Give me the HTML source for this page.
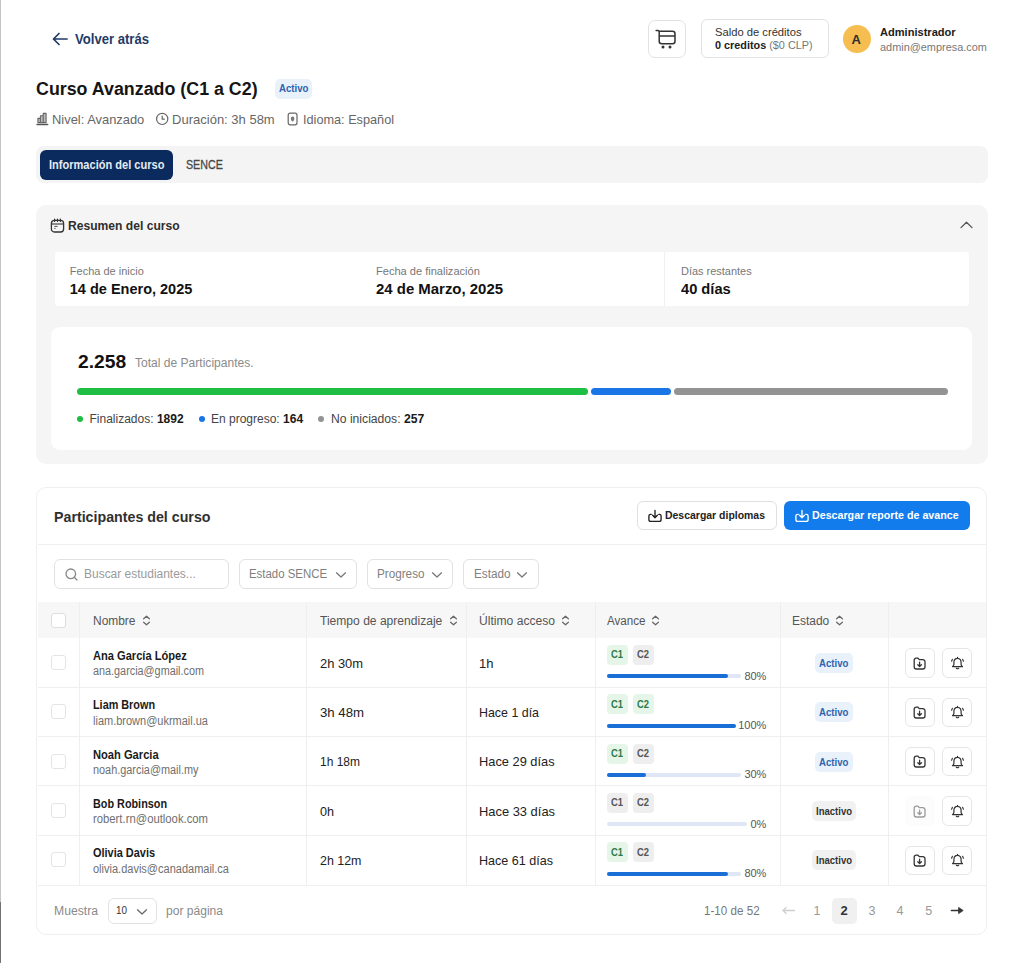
<!DOCTYPE html>
<html><head><meta charset="utf-8"><style>
html,body{margin:0;padding:0;background:#fff;}
body{width:1024px;height:965px;position:relative;overflow:hidden;font-family:"Liberation Sans",sans-serif;}
</style></head><body>
<div style="position:absolute;left:0.00px;top:0.00px;width:1.30px;height:902.00px;background:#c4c4c4"></div>
<div style="position:absolute;left:0.00px;top:902.00px;width:1.30px;height:61.00px;background:#727272"></div>
<svg style="position:absolute;left:50px;top:30px;" width="20" height="18" viewBox="0 0 20 18" fill="none"><path d="M3.5 9 H17 M3.5 9 L9 3.5 M3.5 9 L9 14.5" stroke="#1f3b66" stroke-width="1.7" stroke-linecap="round" stroke-linejoin="round"/></svg>
<div style="position:absolute;left:75.20px;top:32.45px;font-size:14px;line-height:14px;font-weight:700;color:#1f3b66;white-space:pre;transform:scaleX(0.9354);transform-origin:0 0;">Volver atrás</div>
<div style="position:absolute;left:647.50px;top:19.70px;width:38.80px;height:38.60px;box-sizing:border-box;border:1px solid #e2e2e2;border-radius:7px;background:#fff"></div>
<svg style="position:absolute;left:647.5px;top:19.7px;" width="39" height="39" viewBox="0 0 39 39" fill="none"><path d="M8.1 10.4 H9.8 Q11.2 10.4 11.2 11.9 V21.3 A2.5 2.5 0 0 0 13.7 23.8 H24.5 A2.5 2.5 0 0 0 27 21.3 V13.8 A2.5 2.5 0 0 0 24.5 11.3 H11.2 M11.2 16.1 H27" stroke="#333" stroke-width="1.5" stroke-linecap="round" stroke-linejoin="round"/><circle cx="15" cy="27" r="1.5" fill="#333"/><circle cx="22" cy="27" r="1.5" fill="#333"/></svg>
<div style="position:absolute;left:701.00px;top:19.40px;width:127.50px;height:39.00px;box-sizing:border-box;border:1px solid #e2e2e2;border-radius:6px;background:#fff"></div>
<div style="position:absolute;left:715.20px;top:26.57px;font-size:11.5px;line-height:11.5px;font-weight:400;color:#333;white-space:pre;transform:scaleX(0.9734);transform-origin:0 0;">Saldo de créditos</div>
<div style="position:absolute;left:715.20px;top:40.07px;font-size:11.5px;line-height:11.5px;white-space:pre;transform:scaleX(0.9427);transform-origin:0 0;"><span style="font-weight:700;color:#222">0 creditos</span><span style="font-weight:400;color:#777"> ($0 CLP)</span></div>
<div style="position:absolute;left:842.50px;top:24.60px;width:28.00px;height:28.00px;border-radius:50%;background:#f6be50"></div>
<div style="position:absolute;left:851.40px;top:33.00px;font-size:13px;line-height:13px;font-weight:700;color:#2e2e2e;white-space:pre;">A</div>
<div style="position:absolute;left:879.80px;top:26.57px;font-size:11.5px;line-height:11.5px;font-weight:700;color:#1c1c1c;white-space:pre;transform:scaleX(0.9619);transform-origin:0 0;">Administrador</div>
<div style="position:absolute;left:880.00px;top:42.02px;font-size:11.2px;line-height:11.2px;font-weight:400;color:#777;white-space:pre;transform:scaleX(0.9753);transform-origin:0 0;">admin@empresa.com</div>
<div style="position:absolute;left:36.40px;top:79.66px;font-size:18px;line-height:18px;font-weight:700;color:#151515;white-space:pre;transform:scaleX(0.9906);transform-origin:0 0;">Curso Avanzado (C1 a C2)</div>
<div style="position:absolute;left:274.60px;top:78.80px;width:37.30px;height:19.90px;background:#e9f1fb;border-radius:5px"></div>
<div style="position:absolute;left:278.50px;top:83.83px;font-size:10px;line-height:10px;font-weight:700;color:#2f63ad;white-space:pre;transform:scaleX(0.9653);transform-origin:0 0;">Activo</div>
<svg style="position:absolute;left:36px;top:111px;" width="13" height="15" viewBox="0 0 13 15" fill="none"><path d="M1.9 11.6 V7.4 H4.4 V11.6 Z M4.4 11.6 V4.8 H7.2 V11.6 Z M7.2 11.6 V2.4 H10.1 V11.6 Z" fill="#bbb" stroke="#666" stroke-width="1.1" stroke-linejoin="round"/><path d="M1.1 13.5 H11.6" stroke="#555" stroke-width="1.6" stroke-linecap="round"/></svg>
<div style="position:absolute;left:52.00px;top:112.60px;font-size:13px;line-height:13px;font-weight:400;color:#666;white-space:pre;transform:scaleX(0.9926);transform-origin:0 0;">Nivel: Avanzado</div>
<svg style="position:absolute;left:155px;top:112px;" width="14" height="14" viewBox="0 0 14 14" fill="none"><circle cx="7.2" cy="6.9" r="5.6" stroke="#666" stroke-width="1.2"/><path d="M7.2 4 V7.2 H9.3" stroke="#666" stroke-width="1.2" stroke-linecap="round" stroke-linejoin="round"/></svg>
<div style="position:absolute;left:172.10px;top:112.60px;font-size:13px;line-height:13px;font-weight:400;color:#666;white-space:pre;">Duración: 3h 58m</div>
<svg style="position:absolute;left:286px;top:111px;" width="13" height="16" viewBox="0 0 13 16" fill="none"><rect x="2.2" y="2.2" width="8.8" height="11.6" rx="2" stroke="#666" stroke-width="1.2"/><path d="M6.6 5.6 C5.2 5.6 4.9 6.6 4.9 7.8 C4.9 9.2 5.8 10.2 6.6 10.6 C7.4 10.2 8.3 9.2 8.3 7.8 C8.3 6.6 8 5.6 6.6 5.6Z" fill="#777"/></svg>
<div style="position:absolute;left:302.50px;top:112.60px;font-size:13px;line-height:13px;font-weight:400;color:#666;white-space:pre;transform:scaleX(0.9762);transform-origin:0 0;">Idioma: Español</div>
<div style="position:absolute;left:36.40px;top:146.00px;width:952.10px;height:37.30px;background:#f4f4f4;border-radius:8px"></div>
<div style="position:absolute;left:39.70px;top:149.70px;width:133.80px;height:30.50px;background:#0b2b5f;border-radius:6px"></div>
<div style="position:absolute;left:48.90px;top:159.12px;font-size:12.5px;line-height:12.5px;font-weight:700;color:#e6ebf3;white-space:pre;transform:scaleX(0.8838);transform-origin:0 0;">Información del curso</div>
<div style="position:absolute;left:186.40px;top:159.03px;font-size:12.6px;line-height:12.6px;font-weight:400;color:#474747;white-space:pre;transform:scaleX(0.8478);transform-origin:0 0;-webkit-text-stroke:0.3px #474747;">SENCE</div>
<div style="position:absolute;left:36.40px;top:204.70px;width:952.10px;height:259.80px;background:#f5f5f5;border-radius:10px"></div>
<svg style="position:absolute;left:49px;top:217px;" width="17" height="17" viewBox="0 0 17 17" fill="none"><rect x="2.4" y="3.4" width="12.2" height="11.6" rx="3" stroke="#333" stroke-width="1.3"/><path d="M2.6 7 H14.4" stroke="#444" stroke-width="1.2"/><path d="M5.6 2 V4.4 M8.5 2 V4.4 M11.4 2 V4.4" stroke="#333" stroke-width="1.2" stroke-linecap="round"/><path d="M5.3 9.4 H8.6 M5.3 11.4 H6.6" stroke="#555" stroke-width="1"/></svg>
<div style="position:absolute;left:68.20px;top:220.42px;font-size:12.5px;line-height:12.5px;font-weight:700;color:#2e2e2e;white-space:pre;transform:scaleX(0.9678);transform-origin:0 0;">Resumen del curso</div>
<svg style="position:absolute;left:958px;top:219px;" width="17" height="12" viewBox="0 0 17 12" fill="none"><path d="M3 8.6 L8.5 3.2 L14 8.6" stroke="#555" stroke-width="1.3" stroke-linecap="round" stroke-linejoin="round"/></svg>
<div style="position:absolute;left:55.40px;top:252.00px;width:913.40px;height:54.30px;background:#fff;border-radius:3px"></div>
<div style="position:absolute;left:664.00px;top:252.00px;width:1.00px;height:54.30px;background:#f0f0f0"></div>
<div style="position:absolute;left:69.80px;top:266.29px;font-size:11px;line-height:11px;font-weight:400;color:#777;white-space:pre;">Fecha de inicio</div>
<div style="position:absolute;left:69.80px;top:282.23px;font-size:14.5px;line-height:14.5px;font-weight:700;color:#111;white-space:pre;">14 de Enero, 2025</div>
<div style="position:absolute;left:375.50px;top:266.29px;font-size:11px;line-height:11px;font-weight:400;color:#777;white-space:pre;transform:scaleX(1.0044);transform-origin:0 0;">Fecha de finalización</div>
<div style="position:absolute;left:375.50px;top:282.23px;font-size:14.5px;line-height:14.5px;font-weight:700;color:#111;white-space:pre;transform:scaleX(1.0299);transform-origin:0 0;">24 de Marzo, 2025</div>
<div style="position:absolute;left:681.10px;top:266.29px;font-size:11px;line-height:11px;font-weight:400;color:#777;white-space:pre;transform:scaleX(0.9969);transform-origin:0 0;">Días restantes</div>
<div style="position:absolute;left:681.10px;top:282.23px;font-size:14.5px;line-height:14.5px;font-weight:700;color:#111;white-space:pre;transform:scaleX(1.0108);transform-origin:0 0;">40 días</div>
<div style="position:absolute;left:51.40px;top:327.20px;width:921.10px;height:122.50px;background:#fff;border-radius:9px"></div>
<div style="position:absolute;left:77.60px;top:353.79px;font-size:17.5px;line-height:17.5px;font-weight:700;color:#111;white-space:pre;transform:scaleX(1.1008);transform-origin:0 0;">2.258</div>
<div style="position:absolute;left:135.20px;top:357.34px;font-size:12px;line-height:12px;font-weight:400;color:#8a8a8a;white-space:pre;transform:scaleX(1.0045);transform-origin:0 0;">Total de Participantes.</div>
<div style="position:absolute;left:77.00px;top:387.70px;width:510.80px;height:7.30px;background:#1fbe45;border-radius:3.5px"></div>
<div style="position:absolute;left:591.00px;top:387.70px;width:79.50px;height:7.30px;background:#1a76e6;border-radius:3.5px"></div>
<div style="position:absolute;left:673.80px;top:387.70px;width:273.80px;height:7.30px;background:#939393;border-radius:3.5px"></div>
<div style="position:absolute;left:77.00px;top:415.60px;width:6.00px;height:6.00px;background:#1fbe45;border-radius:50%"></div>
<div style="position:absolute;left:89.50px;top:412.84px;font-size:12px;line-height:12px;white-space:pre;"><span style="font-weight:400;color:#444">Finalizados: </span><span style="font-weight:700;color:#1a1a1a">1892</span></div>
<div style="position:absolute;left:199.00px;top:415.60px;width:6.00px;height:6.00px;background:#1a76e6;border-radius:50%"></div>
<div style="position:absolute;left:211.00px;top:412.84px;font-size:12px;line-height:12px;white-space:pre;"><span style="font-weight:400;color:#444">En progreso: </span><span style="font-weight:700;color:#1a1a1a">164</span></div>
<div style="position:absolute;left:318.40px;top:415.60px;width:6.00px;height:6.00px;background:#939393;border-radius:50%"></div>
<div style="position:absolute;left:331.10px;top:412.84px;font-size:12px;line-height:12px;white-space:pre;transform:scaleX(1.0125);transform-origin:0 0;"><span style="font-weight:400;color:#444">No iniciados: </span><span style="font-weight:700;color:#1a1a1a">257</span></div>
<div style="position:absolute;left:36.40px;top:486.80px;width:951.10px;height:448.70px;box-sizing:border-box;border:1.5px solid #efefef;border-radius:10px;background:#fff"></div>
<div style="position:absolute;left:54.30px;top:508.90px;font-size:15px;line-height:15px;font-weight:700;color:#303030;white-space:pre;transform:scaleX(0.9481);transform-origin:0 0;">Participantes del curso</div>
<div style="position:absolute;left:637.40px;top:501.00px;width:139.20px;height:29.00px;box-sizing:border-box;border:1px solid #e0e0e0;border-radius:6px;background:#fff"></div>
<svg style="position:absolute;left:646.5px;top:507.5px;" width="16" height="16" viewBox="0 0 16 16" fill="none"><path d="M4.3 6.3 H3.7 A1.8 1.8 0 0 0 1.9 8.1 V11.5 A1.9 1.9 0 0 0 3.8 13.4 H12.2 A1.9 1.9 0 0 0 14.1 11.5 V8.1 A1.8 1.8 0 0 0 12.3 6.3 H11.7" stroke="#222" stroke-width="1.35" stroke-linecap="round"/><path d="M8 2.3 V9.7 M5.6 7.3 L8 9.8 L10.4 7.3" stroke="#222" stroke-width="1.35" stroke-linecap="round" stroke-linejoin="round"/></svg>
<div style="position:absolute;left:665.30px;top:509.57px;font-size:11.5px;line-height:11.5px;font-weight:700;color:#222;white-space:pre;transform:scaleX(0.9096);transform-origin:0 0;">Descargar diplomas</div>
<div style="position:absolute;left:784.40px;top:501.00px;width:185.60px;height:29.00px;background:#137cec;border-radius:6px"></div>
<svg style="position:absolute;left:793.7px;top:507.5px;" width="16" height="16" viewBox="0 0 16 16" fill="none"><path d="M4.3 6.3 H3.7 A1.8 1.8 0 0 0 1.9 8.1 V11.5 A1.9 1.9 0 0 0 3.8 13.4 H12.2 A1.9 1.9 0 0 0 14.1 11.5 V8.1 A1.8 1.8 0 0 0 12.3 6.3 H11.7" stroke="#fff" stroke-width="1.35" stroke-linecap="round"/><path d="M8 2.3 V9.7 M5.6 7.3 L8 9.8 L10.4 7.3" stroke="#fff" stroke-width="1.35" stroke-linecap="round" stroke-linejoin="round"/></svg>
<div style="position:absolute;left:812.20px;top:509.57px;font-size:11.5px;line-height:11.5px;font-weight:700;color:#fff;white-space:pre;transform:scaleX(0.9285);transform-origin:0 0;">Descargar reporte de avance</div>
<div style="position:absolute;left:37.50px;top:544.00px;width:948.00px;height:1.00px;background:#f0f0f0"></div>
<div style="position:absolute;left:54.30px;top:559.20px;width:175.20px;height:29.40px;box-sizing:border-box;border:1px solid #e2e2e2;border-radius:6px;background:#fff"></div>
<div style="position:absolute;left:239.40px;top:559.20px;width:117.20px;height:29.40px;box-sizing:border-box;border:1px solid #e2e2e2;border-radius:6px;background:#fff"></div>
<div style="position:absolute;left:366.60px;top:559.20px;width:86.80px;height:29.40px;box-sizing:border-box;border:1px solid #e2e2e2;border-radius:6px;background:#fff"></div>
<div style="position:absolute;left:462.80px;top:559.20px;width:76.00px;height:29.40px;box-sizing:border-box;border:1px solid #e2e2e2;border-radius:6px;background:#fff"></div>
<svg style="position:absolute;left:63.5px;top:567px;" width="15" height="15" viewBox="0 0 15 15" fill="none"><circle cx="6.8" cy="6.8" r="4.8" stroke="#888" stroke-width="1.3"/><path d="M10.3 10.3 L13 13" stroke="#888" stroke-width="1.3" stroke-linecap="round"/></svg>
<div style="position:absolute;left:84.40px;top:568.24px;font-size:12px;line-height:12px;font-weight:400;color:#9a9a9a;white-space:pre;transform:scaleX(0.9977);transform-origin:0 0;">Buscar estudiantes...</div>
<div style="position:absolute;left:249.40px;top:568.24px;font-size:12px;line-height:12px;font-weight:400;color:#808080;white-space:pre;transform:scaleX(0.9508);transform-origin:0 0;">Estado SENCE</div>
<svg style="position:absolute;left:334.6px;top:570.5px;" width="12" height="8" viewBox="0 0 12 8" fill="none"><path d="M1.5 1.8 L6 6 L10.5 1.8" stroke="#777" stroke-width="1.25" stroke-linecap="round" stroke-linejoin="round"/></svg>
<div style="position:absolute;left:376.90px;top:568.24px;font-size:12px;line-height:12px;font-weight:400;color:#808080;white-space:pre;transform:scaleX(0.9754);transform-origin:0 0;">Progreso</div>
<svg style="position:absolute;left:431.3px;top:570.5px;" width="12" height="8" viewBox="0 0 12 8" fill="none"><path d="M1.5 1.8 L6 6 L10.5 1.8" stroke="#777" stroke-width="1.25" stroke-linecap="round" stroke-linejoin="round"/></svg>
<div style="position:absolute;left:473.80px;top:568.24px;font-size:12px;line-height:12px;font-weight:400;color:#808080;white-space:pre;transform:scaleX(0.9771);transform-origin:0 0;">Estado</div>
<svg style="position:absolute;left:516.3px;top:570.5px;" width="12" height="8" viewBox="0 0 12 8" fill="none"><path d="M1.5 1.8 L6 6 L10.5 1.8" stroke="#777" stroke-width="1.25" stroke-linecap="round" stroke-linejoin="round"/></svg>
<div style="position:absolute;left:37.50px;top:602.30px;width:948.00px;height:36.10px;background:#f7f7f7"></div>
<div style="position:absolute;left:50.80px;top:613.00px;width:15.00px;height:15.00px;box-sizing:border-box;border:1px solid #dedede;border-radius:3px;background:#fff"></div>
<div style="position:absolute;left:92.70px;top:614.54px;font-size:12px;line-height:12px;font-weight:400;color:#555;white-space:pre;transform:scaleX(0.9957);transform-origin:0 0;">Nombre</div>
<svg style="position:absolute;left:141.8px;top:615.2px;" width="9" height="11" viewBox="0 0 9 11" fill="none"><path d="M1.6 3.8 L4.5 1.2 L7.4 3.8 M1.6 7.2 L4.5 9.8 L7.4 7.2" stroke="#666" stroke-width="1.2" stroke-linecap="round" stroke-linejoin="round"/></svg>
<div style="position:absolute;left:319.70px;top:614.54px;font-size:12px;line-height:12px;font-weight:400;color:#555;white-space:pre;transform:scaleX(1.0055);transform-origin:0 0;">Tiempo de aprendizaje</div>
<svg style="position:absolute;left:449px;top:615.2px;" width="9" height="11" viewBox="0 0 9 11" fill="none"><path d="M1.6 3.8 L4.5 1.2 L7.4 3.8 M1.6 7.2 L4.5 9.8 L7.4 7.2" stroke="#666" stroke-width="1.2" stroke-linecap="round" stroke-linejoin="round"/></svg>
<div style="position:absolute;left:479.00px;top:614.54px;font-size:12px;line-height:12px;font-weight:400;color:#555;white-space:pre;transform:scaleX(1.0085);transform-origin:0 0;">Último acceso</div>
<svg style="position:absolute;left:561.3px;top:615.2px;" width="9" height="11" viewBox="0 0 9 11" fill="none"><path d="M1.6 3.8 L4.5 1.2 L7.4 3.8 M1.6 7.2 L4.5 9.8 L7.4 7.2" stroke="#666" stroke-width="1.2" stroke-linecap="round" stroke-linejoin="round"/></svg>
<div style="position:absolute;left:606.80px;top:614.54px;font-size:12px;line-height:12px;font-weight:400;color:#555;white-space:pre;transform:scaleX(0.9672);transform-origin:0 0;">Avance</div>
<svg style="position:absolute;left:651px;top:615.2px;" width="9" height="11" viewBox="0 0 9 11" fill="none"><path d="M1.6 3.8 L4.5 1.2 L7.4 3.8 M1.6 7.2 L4.5 9.8 L7.4 7.2" stroke="#666" stroke-width="1.2" stroke-linecap="round" stroke-linejoin="round"/></svg>
<div style="position:absolute;left:792.20px;top:614.54px;font-size:12px;line-height:12px;font-weight:400;color:#555;white-space:pre;transform:scaleX(0.9958);transform-origin:0 0;">Estado</div>
<svg style="position:absolute;left:835px;top:615.2px;" width="9" height="11" viewBox="0 0 9 11" fill="none"><path d="M1.6 3.8 L4.5 1.2 L7.4 3.8 M1.6 7.2 L4.5 9.8 L7.4 7.2" stroke="#666" stroke-width="1.2" stroke-linecap="round" stroke-linejoin="round"/></svg>
<div style="position:absolute;left:79.30px;top:602.30px;width:1.00px;height:282.70px;background:#efefef"></div>
<div style="position:absolute;left:306.40px;top:602.30px;width:1.00px;height:282.70px;background:#efefef"></div>
<div style="position:absolute;left:466.00px;top:602.30px;width:1.00px;height:282.70px;background:#efefef"></div>
<div style="position:absolute;left:595.20px;top:602.30px;width:1.00px;height:282.70px;background:#efefef"></div>
<div style="position:absolute;left:779.50px;top:602.30px;width:1.00px;height:282.70px;background:#efefef"></div>
<div style="position:absolute;left:887.80px;top:602.30px;width:1.00px;height:282.70px;background:#efefef"></div>
<div style="position:absolute;left:37.50px;top:686.75px;width:948.00px;height:1.00px;background:#efefef"></div>
<div style="position:absolute;left:50.80px;top:655.00px;width:15.00px;height:15.00px;box-sizing:border-box;border:1px solid #e4e4e4;border-radius:3px;background:#fff"></div>
<div style="position:absolute;left:92.70px;top:649.84px;font-size:12px;line-height:12px;font-weight:700;color:#1a1a1a;white-space:pre;transform:scaleX(0.9244);transform-origin:0 0;">Ana García López</div>
<div style="position:absolute;left:92.70px;top:665.44px;font-size:12px;line-height:12px;font-weight:400;color:#6f6f6f;white-space:pre;transform:scaleX(0.9031);transform-origin:0 0;">ana.garcia@gmail.com</div>
<div style="position:absolute;left:319.70px;top:656.50px;font-size:13px;line-height:13px;font-weight:400;color:#222;white-space:pre;transform:scaleX(0.9918);transform-origin:0 0;">2h 30m</div>
<div style="position:absolute;left:479.00px;top:656.50px;font-size:13px;line-height:13px;font-weight:400;color:#222;white-space:pre;">1h</div>
<div style="position:absolute;left:606.80px;top:645.00px;width:21.20px;height:20.00px;border-radius:4px;background:#e5f6e9"></div>
<div style="position:absolute;left:611.40px;top:650.24px;font-size:10px;line-height:10px;font-weight:700;color:#2d7a47;white-space:pre;transform:scaleX(0.9390);transform-origin:0 0;">C1</div>
<div style="position:absolute;left:632.60px;top:645.00px;width:21.60px;height:20.00px;border-radius:4px;background:#eeeeee"></div>
<div style="position:absolute;left:637.20px;top:650.24px;font-size:10px;line-height:10px;font-weight:700;color:#555;white-space:pre;transform:scaleX(0.9390);transform-origin:0 0;">C2</div>
<div style="position:absolute;left:606.80px;top:674.30px;width:134.50px;height:4.00px;background:#dfe6f5;border-radius:2px"></div>
<div style="position:absolute;left:606.80px;top:674.30px;width:121.30px;height:4.00px;background:#1a6fd6;border-radius:2px"></div>
<div style="position:absolute;left:744.39px;top:670.69px;font-size:11px;line-height:11px;font-weight:400;color:#555;white-space:pre;">80%</div>
<div style="position:absolute;left:814.80px;top:653.00px;width:37.80px;height:20.00px;background:#e9f1fb;border-radius:5px"></div>
<div style="position:absolute;left:819.00px;top:657.91px;font-size:10.5px;line-height:10.5px;font-weight:700;color:#2f63ad;white-space:pre;transform:scaleX(0.9162);transform-origin:0 0;">Activo</div>
<div style="position:absolute;left:905.00px;top:648.20px;width:29.50px;height:29.60px;box-sizing:border-box;border:1px solid #e6e6e6;border-radius:6px;background:#fff"></div>
<svg style="position:absolute;left:912.2px;top:655.6px;" width="15" height="15" viewBox="0 0 15 15" fill="none"><path d="M2.2 4.2 A2 2 0 0 1 4.2 2.2 H6 L7.3 3.6 H10.8 A2.2 2.2 0 0 1 13 5.8 V10.8 A2.2 2.2 0 0 1 10.8 13 H4.4 A2.2 2.2 0 0 1 2.2 10.8 Z" stroke="#333" stroke-width="1.3" stroke-linejoin="round"/><path d="M7.6 6.2 V10.4 M5.8 8.8 L7.6 10.6 L9.4 8.8" stroke="#333" stroke-width="1.3" stroke-linecap="round" stroke-linejoin="round"/></svg>
<div style="position:absolute;left:942.00px;top:648.20px;width:29.50px;height:29.60px;box-sizing:border-box;border:1px solid #e6e6e6;border-radius:6px;background:#fff"></div>
<svg style="position:absolute;left:950px;top:655.9px;" width="15" height="15" viewBox="0 0 15 15" fill="none"><path d="M7.5 1.3 V2.3 M7.5 2.3 C4.9 2.3 3.9 4.4 3.9 6.6 V8.4 C3.9 9.3 3.2 10 2.5 10.7 H12.5 C11.8 10 11.1 9.3 11.1 8.4 V6.6 C11.1 4.4 10.1 2.3 7.5 2.3 Z" stroke="#333" stroke-width="1.2" stroke-linejoin="round" stroke-linecap="round"/><path d="M6.3 12.1 Q7.5 13.4 8.7 12.1" stroke="#333" stroke-width="1.2" stroke-linecap="round"/><path d="M1.6 5.3 L2.4 3.3 M13.4 5.3 L12.6 3.3" stroke="#333" stroke-width="1.1" stroke-linecap="round"/></svg>
<div style="position:absolute;left:37.50px;top:736.10px;width:948.00px;height:1.00px;background:#efefef"></div>
<div style="position:absolute;left:50.80px;top:704.35px;width:15.00px;height:15.00px;box-sizing:border-box;border:1px solid #e4e4e4;border-radius:3px;background:#fff"></div>
<div style="position:absolute;left:92.70px;top:699.19px;font-size:12px;line-height:12px;font-weight:700;color:#1a1a1a;white-space:pre;transform:scaleX(0.9028);transform-origin:0 0;">Liam Brown</div>
<div style="position:absolute;left:92.70px;top:714.79px;font-size:12px;line-height:12px;font-weight:400;color:#6f6f6f;white-space:pre;transform:scaleX(0.9158);transform-origin:0 0;">liam.brown@ukrmail.ua</div>
<div style="position:absolute;left:319.70px;top:705.85px;font-size:13px;line-height:13px;font-weight:400;color:#222;white-space:pre;transform:scaleX(1.0149);transform-origin:0 0;">3h 48m</div>
<div style="position:absolute;left:479.00px;top:705.85px;font-size:13px;line-height:13px;font-weight:400;color:#222;white-space:pre;transform:scaleX(0.9542);transform-origin:0 0;">Hace 1 día</div>
<div style="position:absolute;left:606.80px;top:694.35px;width:21.20px;height:20.00px;border-radius:4px;background:#e5f6e9"></div>
<div style="position:absolute;left:611.40px;top:699.59px;font-size:10px;line-height:10px;font-weight:700;color:#2d7a47;white-space:pre;transform:scaleX(0.9390);transform-origin:0 0;">C1</div>
<div style="position:absolute;left:632.60px;top:694.35px;width:21.60px;height:20.00px;border-radius:4px;background:#e5f6e9"></div>
<div style="position:absolute;left:637.20px;top:699.59px;font-size:10px;line-height:10px;font-weight:700;color:#2d7a47;white-space:pre;transform:scaleX(0.9390);transform-origin:0 0;">C2</div>
<div style="position:absolute;left:606.80px;top:723.65px;width:129.70px;height:4.00px;background:#dfe6f5;border-radius:2px"></div>
<div style="position:absolute;left:606.80px;top:723.65px;width:129.70px;height:4.00px;background:#1a6fd6;border-radius:2px"></div>
<div style="position:absolute;left:738.26px;top:720.04px;font-size:11px;line-height:11px;font-weight:400;color:#555;white-space:pre;">100%</div>
<div style="position:absolute;left:814.80px;top:702.35px;width:37.80px;height:20.00px;background:#e9f1fb;border-radius:5px"></div>
<div style="position:absolute;left:819.00px;top:707.26px;font-size:10.5px;line-height:10.5px;font-weight:700;color:#2f63ad;white-space:pre;transform:scaleX(0.9162);transform-origin:0 0;">Activo</div>
<div style="position:absolute;left:905.00px;top:697.55px;width:29.50px;height:29.60px;box-sizing:border-box;border:1px solid #e6e6e6;border-radius:6px;background:#fff"></div>
<svg style="position:absolute;left:912.2px;top:704.95px;" width="15" height="15" viewBox="0 0 15 15" fill="none"><path d="M2.2 4.2 A2 2 0 0 1 4.2 2.2 H6 L7.3 3.6 H10.8 A2.2 2.2 0 0 1 13 5.8 V10.8 A2.2 2.2 0 0 1 10.8 13 H4.4 A2.2 2.2 0 0 1 2.2 10.8 Z" stroke="#333" stroke-width="1.3" stroke-linejoin="round"/><path d="M7.6 6.2 V10.4 M5.8 8.8 L7.6 10.6 L9.4 8.8" stroke="#333" stroke-width="1.3" stroke-linecap="round" stroke-linejoin="round"/></svg>
<div style="position:absolute;left:942.00px;top:697.55px;width:29.50px;height:29.60px;box-sizing:border-box;border:1px solid #e6e6e6;border-radius:6px;background:#fff"></div>
<svg style="position:absolute;left:950px;top:705.25px;" width="15" height="15" viewBox="0 0 15 15" fill="none"><path d="M7.5 1.3 V2.3 M7.5 2.3 C4.9 2.3 3.9 4.4 3.9 6.6 V8.4 C3.9 9.3 3.2 10 2.5 10.7 H12.5 C11.8 10 11.1 9.3 11.1 8.4 V6.6 C11.1 4.4 10.1 2.3 7.5 2.3 Z" stroke="#333" stroke-width="1.2" stroke-linejoin="round" stroke-linecap="round"/><path d="M6.3 12.1 Q7.5 13.4 8.7 12.1" stroke="#333" stroke-width="1.2" stroke-linecap="round"/><path d="M1.6 5.3 L2.4 3.3 M13.4 5.3 L12.6 3.3" stroke="#333" stroke-width="1.1" stroke-linecap="round"/></svg>
<div style="position:absolute;left:37.50px;top:785.45px;width:948.00px;height:1.00px;background:#efefef"></div>
<div style="position:absolute;left:50.80px;top:753.70px;width:15.00px;height:15.00px;box-sizing:border-box;border:1px solid #e4e4e4;border-radius:3px;background:#fff"></div>
<div style="position:absolute;left:92.70px;top:748.54px;font-size:12px;line-height:12px;font-weight:700;color:#1a1a1a;white-space:pre;transform:scaleX(0.9283);transform-origin:0 0;">Noah Garcia</div>
<div style="position:absolute;left:92.70px;top:764.14px;font-size:12px;line-height:12px;font-weight:400;color:#6f6f6f;white-space:pre;transform:scaleX(0.9077);transform-origin:0 0;">noah.garcia@mail.my</div>
<div style="position:absolute;left:319.70px;top:755.20px;font-size:13px;line-height:13px;font-weight:400;color:#222;white-space:pre;transform:scaleX(0.9226);transform-origin:0 0;">1h 18m</div>
<div style="position:absolute;left:479.00px;top:755.20px;font-size:13px;line-height:13px;font-weight:400;color:#222;white-space:pre;transform:scaleX(0.9868);transform-origin:0 0;">Hace 29 días</div>
<div style="position:absolute;left:606.80px;top:743.70px;width:21.20px;height:20.00px;border-radius:4px;background:#e5f6e9"></div>
<div style="position:absolute;left:611.40px;top:748.94px;font-size:10px;line-height:10px;font-weight:700;color:#2d7a47;white-space:pre;transform:scaleX(0.9390);transform-origin:0 0;">C1</div>
<div style="position:absolute;left:632.60px;top:743.70px;width:21.60px;height:20.00px;border-radius:4px;background:#eeeeee"></div>
<div style="position:absolute;left:637.20px;top:748.94px;font-size:10px;line-height:10px;font-weight:700;color:#555;white-space:pre;transform:scaleX(0.9390);transform-origin:0 0;">C2</div>
<div style="position:absolute;left:606.80px;top:773.00px;width:133.80px;height:4.00px;background:#dfe6f5;border-radius:2px"></div>
<div style="position:absolute;left:606.80px;top:773.00px;width:39.50px;height:4.00px;background:#1a6fd6;border-radius:2px"></div>
<div style="position:absolute;left:744.39px;top:769.39px;font-size:11px;line-height:11px;font-weight:400;color:#555;white-space:pre;">30%</div>
<div style="position:absolute;left:814.80px;top:751.70px;width:37.80px;height:20.00px;background:#e9f1fb;border-radius:5px"></div>
<div style="position:absolute;left:819.00px;top:756.61px;font-size:10.5px;line-height:10.5px;font-weight:700;color:#2f63ad;white-space:pre;transform:scaleX(0.9162);transform-origin:0 0;">Activo</div>
<div style="position:absolute;left:905.00px;top:746.90px;width:29.50px;height:29.60px;box-sizing:border-box;border:1px solid #e6e6e6;border-radius:6px;background:#fff"></div>
<svg style="position:absolute;left:912.2px;top:754.3000000000001px;" width="15" height="15" viewBox="0 0 15 15" fill="none"><path d="M2.2 4.2 A2 2 0 0 1 4.2 2.2 H6 L7.3 3.6 H10.8 A2.2 2.2 0 0 1 13 5.8 V10.8 A2.2 2.2 0 0 1 10.8 13 H4.4 A2.2 2.2 0 0 1 2.2 10.8 Z" stroke="#333" stroke-width="1.3" stroke-linejoin="round"/><path d="M7.6 6.2 V10.4 M5.8 8.8 L7.6 10.6 L9.4 8.8" stroke="#333" stroke-width="1.3" stroke-linecap="round" stroke-linejoin="round"/></svg>
<div style="position:absolute;left:942.00px;top:746.90px;width:29.50px;height:29.60px;box-sizing:border-box;border:1px solid #e6e6e6;border-radius:6px;background:#fff"></div>
<svg style="position:absolute;left:950px;top:754.6px;" width="15" height="15" viewBox="0 0 15 15" fill="none"><path d="M7.5 1.3 V2.3 M7.5 2.3 C4.9 2.3 3.9 4.4 3.9 6.6 V8.4 C3.9 9.3 3.2 10 2.5 10.7 H12.5 C11.8 10 11.1 9.3 11.1 8.4 V6.6 C11.1 4.4 10.1 2.3 7.5 2.3 Z" stroke="#333" stroke-width="1.2" stroke-linejoin="round" stroke-linecap="round"/><path d="M6.3 12.1 Q7.5 13.4 8.7 12.1" stroke="#333" stroke-width="1.2" stroke-linecap="round"/><path d="M1.6 5.3 L2.4 3.3 M13.4 5.3 L12.6 3.3" stroke="#333" stroke-width="1.1" stroke-linecap="round"/></svg>
<div style="position:absolute;left:37.50px;top:834.80px;width:948.00px;height:1.00px;background:#efefef"></div>
<div style="position:absolute;left:50.80px;top:803.05px;width:15.00px;height:15.00px;box-sizing:border-box;border:1px solid #e4e4e4;border-radius:3px;background:#fff"></div>
<div style="position:absolute;left:92.70px;top:797.89px;font-size:12px;line-height:12px;font-weight:700;color:#1a1a1a;white-space:pre;transform:scaleX(0.9026);transform-origin:0 0;">Bob Robinson</div>
<div style="position:absolute;left:92.70px;top:813.49px;font-size:12px;line-height:12px;font-weight:400;color:#6f6f6f;white-space:pre;transform:scaleX(0.9408);transform-origin:0 0;">robert.rn@outlook.com</div>
<div style="position:absolute;left:319.70px;top:804.55px;font-size:13px;line-height:13px;font-weight:400;color:#222;white-space:pre;transform:scaleX(0.9685);transform-origin:0 0;">0h</div>
<div style="position:absolute;left:479.00px;top:804.55px;font-size:13px;line-height:13px;font-weight:400;color:#222;white-space:pre;transform:scaleX(0.9921);transform-origin:0 0;">Hace 33 días</div>
<div style="position:absolute;left:606.80px;top:793.05px;width:21.20px;height:20.00px;border-radius:4px;background:#eeeeee"></div>
<div style="position:absolute;left:611.40px;top:798.29px;font-size:10px;line-height:10px;font-weight:700;color:#555;white-space:pre;transform:scaleX(0.9390);transform-origin:0 0;">C1</div>
<div style="position:absolute;left:632.60px;top:793.05px;width:21.60px;height:20.00px;border-radius:4px;background:#eeeeee"></div>
<div style="position:absolute;left:637.20px;top:798.29px;font-size:10px;line-height:10px;font-weight:700;color:#555;white-space:pre;transform:scaleX(0.9390);transform-origin:0 0;">C2</div>
<div style="position:absolute;left:606.80px;top:822.35px;width:140.60px;height:4.00px;background:#dfe6f5;border-radius:2px"></div>
<div style="position:absolute;left:750.50px;top:818.74px;font-size:11px;line-height:11px;font-weight:400;color:#555;white-space:pre;">0%</div>
<div style="position:absolute;left:811.80px;top:801.05px;width:44.60px;height:20.00px;background:#f1f1f1;border-radius:5px"></div>
<div style="position:absolute;left:816.00px;top:805.96px;font-size:10.5px;line-height:10.5px;font-weight:700;color:#333;white-space:pre;transform:scaleX(0.9073);transform-origin:0 0;">Inactivo</div>
<div style="position:absolute;left:905.00px;top:796.25px;width:29.50px;height:29.60px;border-radius:6px;background:#fcfcfc"></div>
<svg style="position:absolute;left:912.2px;top:803.6500000000001px;" width="15" height="15" viewBox="0 0 15 15" fill="none"><path d="M2.2 4.2 A2 2 0 0 1 4.2 2.2 H6 L7.3 3.6 H10.8 A2.2 2.2 0 0 1 13 5.8 V10.8 A2.2 2.2 0 0 1 10.8 13 H4.4 A2.2 2.2 0 0 1 2.2 10.8 Z" stroke="#9a9a9a" stroke-width="1.3" stroke-linejoin="round"/><path d="M7.6 6.2 V10.4 M5.8 8.8 L7.6 10.6 L9.4 8.8" stroke="#9a9a9a" stroke-width="1.3" stroke-linecap="round" stroke-linejoin="round"/></svg>
<div style="position:absolute;left:942.00px;top:796.25px;width:29.50px;height:29.60px;box-sizing:border-box;border:1px solid #e6e6e6;border-radius:6px;background:#fff"></div>
<svg style="position:absolute;left:950px;top:803.95px;" width="15" height="15" viewBox="0 0 15 15" fill="none"><path d="M7.5 1.3 V2.3 M7.5 2.3 C4.9 2.3 3.9 4.4 3.9 6.6 V8.4 C3.9 9.3 3.2 10 2.5 10.7 H12.5 C11.8 10 11.1 9.3 11.1 8.4 V6.6 C11.1 4.4 10.1 2.3 7.5 2.3 Z" stroke="#333" stroke-width="1.2" stroke-linejoin="round" stroke-linecap="round"/><path d="M6.3 12.1 Q7.5 13.4 8.7 12.1" stroke="#333" stroke-width="1.2" stroke-linecap="round"/><path d="M1.6 5.3 L2.4 3.3 M13.4 5.3 L12.6 3.3" stroke="#333" stroke-width="1.1" stroke-linecap="round"/></svg>
<div style="position:absolute;left:50.80px;top:852.40px;width:15.00px;height:15.00px;box-sizing:border-box;border:1px solid #e4e4e4;border-radius:3px;background:#fff"></div>
<div style="position:absolute;left:92.70px;top:847.24px;font-size:12px;line-height:12px;font-weight:700;color:#1a1a1a;white-space:pre;transform:scaleX(0.9112);transform-origin:0 0;">Olivia Davis</div>
<div style="position:absolute;left:92.70px;top:862.84px;font-size:12px;line-height:12px;font-weight:400;color:#6f6f6f;white-space:pre;transform:scaleX(0.9173);transform-origin:0 0;">olivia.davis@canadamail.ca</div>
<div style="position:absolute;left:319.70px;top:853.90px;font-size:13px;line-height:13px;font-weight:400;color:#222;white-space:pre;transform:scaleX(0.9549);transform-origin:0 0;">2h 12m</div>
<div style="position:absolute;left:479.00px;top:853.90px;font-size:13px;line-height:13px;font-weight:400;color:#222;white-space:pre;transform:scaleX(0.9659);transform-origin:0 0;">Hace 61 días</div>
<div style="position:absolute;left:606.80px;top:842.40px;width:21.20px;height:20.00px;border-radius:4px;background:#e5f6e9"></div>
<div style="position:absolute;left:611.40px;top:847.63px;font-size:10px;line-height:10px;font-weight:700;color:#2d7a47;white-space:pre;transform:scaleX(0.9390);transform-origin:0 0;">C1</div>
<div style="position:absolute;left:632.60px;top:842.40px;width:21.60px;height:20.00px;border-radius:4px;background:#eeeeee"></div>
<div style="position:absolute;left:637.20px;top:847.63px;font-size:10px;line-height:10px;font-weight:700;color:#555;white-space:pre;transform:scaleX(0.9390);transform-origin:0 0;">C2</div>
<div style="position:absolute;left:606.80px;top:871.70px;width:133.80px;height:4.00px;background:#dfe6f5;border-radius:2px"></div>
<div style="position:absolute;left:606.80px;top:871.70px;width:120.90px;height:4.00px;background:#1a6fd6;border-radius:2px"></div>
<div style="position:absolute;left:744.39px;top:868.09px;font-size:11px;line-height:11px;font-weight:400;color:#555;white-space:pre;">80%</div>
<div style="position:absolute;left:811.80px;top:850.40px;width:44.60px;height:20.00px;background:#f1f1f1;border-radius:5px"></div>
<div style="position:absolute;left:816.00px;top:855.31px;font-size:10.5px;line-height:10.5px;font-weight:700;color:#333;white-space:pre;transform:scaleX(0.9073);transform-origin:0 0;">Inactivo</div>
<div style="position:absolute;left:905.00px;top:845.60px;width:29.50px;height:29.60px;box-sizing:border-box;border:1px solid #e6e6e6;border-radius:6px;background:#fff"></div>
<svg style="position:absolute;left:912.2px;top:853.0px;" width="15" height="15" viewBox="0 0 15 15" fill="none"><path d="M2.2 4.2 A2 2 0 0 1 4.2 2.2 H6 L7.3 3.6 H10.8 A2.2 2.2 0 0 1 13 5.8 V10.8 A2.2 2.2 0 0 1 10.8 13 H4.4 A2.2 2.2 0 0 1 2.2 10.8 Z" stroke="#333" stroke-width="1.3" stroke-linejoin="round"/><path d="M7.6 6.2 V10.4 M5.8 8.8 L7.6 10.6 L9.4 8.8" stroke="#333" stroke-width="1.3" stroke-linecap="round" stroke-linejoin="round"/></svg>
<div style="position:absolute;left:942.00px;top:845.60px;width:29.50px;height:29.60px;box-sizing:border-box;border:1px solid #e6e6e6;border-radius:6px;background:#fff"></div>
<svg style="position:absolute;left:950px;top:853.3px;" width="15" height="15" viewBox="0 0 15 15" fill="none"><path d="M7.5 1.3 V2.3 M7.5 2.3 C4.9 2.3 3.9 4.4 3.9 6.6 V8.4 C3.9 9.3 3.2 10 2.5 10.7 H12.5 C11.8 10 11.1 9.3 11.1 8.4 V6.6 C11.1 4.4 10.1 2.3 7.5 2.3 Z" stroke="#333" stroke-width="1.2" stroke-linejoin="round" stroke-linecap="round"/><path d="M6.3 12.1 Q7.5 13.4 8.7 12.1" stroke="#333" stroke-width="1.2" stroke-linecap="round"/><path d="M1.6 5.3 L2.4 3.3 M13.4 5.3 L12.6 3.3" stroke="#333" stroke-width="1.1" stroke-linecap="round"/></svg>
<div style="position:absolute;left:37.50px;top:884.60px;width:948.00px;height:1.00px;background:#efefef"></div>
<div style="position:absolute;left:54.00px;top:904.84px;font-size:12px;line-height:12px;font-weight:400;color:#8a8a8a;white-space:pre;transform:scaleX(1.0149);transform-origin:0 0;">Muestra</div>
<div style="position:absolute;left:107.60px;top:898.00px;width:49.00px;height:25.80px;box-sizing:border-box;border:1px solid #e2e2e2;border-radius:6px;background:#fff"></div>
<div style="position:absolute;left:115.80px;top:905.29px;font-size:11px;line-height:11px;font-weight:400;color:#333;white-space:pre;transform:scaleX(0.8993);transform-origin:0 0;">10</div>
<svg style="position:absolute;left:136.2px;top:908px;" width="12" height="8" viewBox="0 0 12 8" fill="none"><path d="M1.5 1.8 L6 6 L10.5 1.8" stroke="#666" stroke-width="1.25" stroke-linecap="round" stroke-linejoin="round"/></svg>
<div style="position:absolute;left:165.70px;top:904.84px;font-size:12px;line-height:12px;font-weight:400;color:#8a8a8a;white-space:pre;transform:scaleX(1.0049);transform-origin:0 0;">por página</div>
<div style="position:absolute;left:703.80px;top:905.04px;font-size:12px;line-height:12px;font-weight:400;color:#777;white-space:pre;transform:scaleX(0.9689);transform-origin:0 0;">1-10 de 52</div>
<svg style="position:absolute;left:780px;top:905px;" width="17" height="11" viewBox="0 0 17 11" fill="none"><path d="M3 5.5 H14.5 M3 5.5 L6.2 2.6 M3 5.5 L6.2 8.4" stroke="#cfcfcf" stroke-width="1.3" stroke-linecap="round" stroke-linejoin="round"/></svg>
<div style="position:absolute;left:813.40px;top:904.62px;font-size:12.5px;line-height:12.5px;font-weight:400;color:#999;white-space:pre;">1</div>
<div style="position:absolute;left:831.80px;top:898.20px;width:24.80px;height:25.60px;background:#f0f0f0;border-radius:5px"></div>
<div style="position:absolute;left:840.40px;top:904.20px;font-size:13px;line-height:13px;font-weight:700;color:#333;white-space:pre;">2</div>
<div style="position:absolute;left:868.60px;top:904.62px;font-size:12.5px;line-height:12.5px;font-weight:400;color:#999;white-space:pre;">3</div>
<div style="position:absolute;left:896.50px;top:904.62px;font-size:12.5px;line-height:12.5px;font-weight:400;color:#999;white-space:pre;">4</div>
<div style="position:absolute;left:925.20px;top:904.62px;font-size:12.5px;line-height:12.5px;font-weight:400;color:#999;white-space:pre;">5</div>
<svg style="position:absolute;left:948.8px;top:905px;" width="17" height="11" viewBox="0 0 17 11" fill="none"><path d="M2.4 5.5 H11.5" stroke="#333" stroke-width="1.6" stroke-linecap="round"/><path d="M9.6 2.4 L14.2 5.5 L9.6 8.6 Z" fill="#333" stroke="#333" stroke-width="0.8" stroke-linejoin="round"/></svg>
</body></html>
